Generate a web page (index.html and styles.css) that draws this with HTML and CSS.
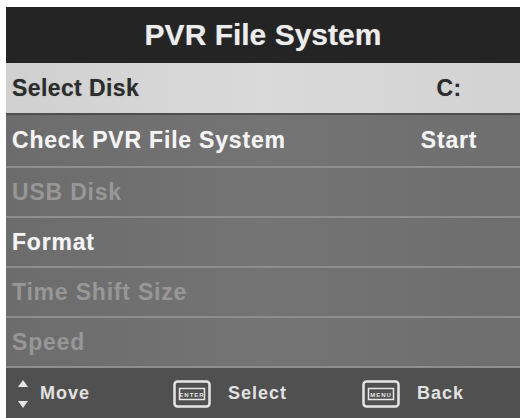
FILE: index.html
```html
<!DOCTYPE html>
<html>
<head>
<meta charset="utf-8">
<link rel="stylesheet" href="styles.css">
</head>
<body>
<div class="panel">
  <div class="header">PVR File System</div>
  <div class="row selected"><span class="label">Select Disk</span><span class="value">C:</span></div>
  <div class="row tall"><span class="label">Check PVR File System</span><span class="value">Start</span></div>
  <div class="row disabled"><span class="label">USB Disk</span><span class="value"></span></div>
  <div class="row"><span class="label">Format</span><span class="value"></span></div>
  <div class="row disabled"><span class="label">Time Shift Size</span><span class="value"></span></div>
  <div class="row disabled"><span class="label">Speed</span><span class="value"></span></div>
  <div class="footer">
    <div class="hint">
      <svg class="arrows" width="10" height="28" viewBox="0 0 10 28"><polygon points="5,0 10,7 0,7" fill="#e6e6e6"/><polygon points="0,21 10,21 5,28" fill="#e6e6e6"/></svg>
      <span>Move</span>
    </div>
    <div class="hint">
      <svg class="key" width="38" height="28" viewBox="0 0 38 28"><rect x="1.5" y="1.5" width="35" height="25" rx="3" fill="none" stroke="#e6e6e6" stroke-width="2.5"/><rect x="6.5" y="8.5" width="25" height="11" fill="none" stroke="#e6e6e6" stroke-width="1.5"/><text x="19" y="16.5" font-size="6" font-family="Liberation Sans, sans-serif" font-weight="bold" fill="#e6e6e6" text-anchor="middle">ENTER</text></svg>
      <span>Select</span>
    </div>
    <div class="hint">
      <svg class="key" width="38" height="28" viewBox="0 0 38 28"><rect x="1.5" y="1.5" width="35" height="25" rx="3" fill="none" stroke="#e6e6e6" stroke-width="2.5"/><rect x="6.5" y="8.5" width="25" height="11" fill="none" stroke="#e6e6e6" stroke-width="1.5"/><text x="19" y="16.5" font-size="6" font-family="Liberation Sans, sans-serif" font-weight="bold" fill="#e6e6e6" text-anchor="middle">MENU</text></svg>
      <span>Back</span>
    </div>
  </div>
</div>
</body>
</html>
```
FILE: styles.css
```css
html, body {
  margin: 0;
  padding: 0;
  background: #ffffff;
}
body {
  font-family: "Liberation Sans", Arial, sans-serif;
  font-weight: bold;
  overflow: hidden;
  height: 418px;
}
.panel {
  margin: 7px 5px 0 6px;
  width: 514px;
  background: #707070;
}
.header {
  height: 56px;
  background: #242424;
  color: #ececec;
  font-size: 30px;
  display: flex;
  align-items: center;
  justify-content: center;
  text-shadow: 0 0 1px rgba(255,255,255,0.4);
}
.row {
  height: 48px;
  display: grid;
  grid-template-columns: 1fr 100px;
  align-items: center;
  padding: 0 21px 0 6px;
  background: linear-gradient(90deg, #6c6c6c, #747474 50%, #6e6e6e);
  border-bottom: 2px solid #8e8e8e;
  color: #f4f4f4;
  font-size: 23px;
  letter-spacing: 0.8px;
  text-shadow: 0 0 1px rgba(255,255,255,0.35);
}
.row.tall {
  height: 51px;
}
.row.selected {
  height: 50px;
  background: linear-gradient(90deg, #d0d0d0, #dadada 50%, #d2d2d2);
  border-bottom: 2px solid #4e4e4e;
  color: #2c2c2c;
  letter-spacing: 0.4px;
  text-shadow: 0 0 1px rgba(0,0,0,0.3);
}
.row.disabled {
  color: #979797;
  text-shadow: none;
}
.value {
  text-align: center;
}
.footer {
  height: 51px;
  background: #505050;
  display: grid;
  grid-template-columns: 155px 189px 1fr;
  align-items: center;
  padding-left: 12px;
  color: #e2e2e2;
  font-size: 18px;
  letter-spacing: 1px;
}
.hint {
  display: flex;
  align-items: center;
}
.arrows {
  margin-right: 12px;
}
.key {
  margin-right: 17px;
}
```
